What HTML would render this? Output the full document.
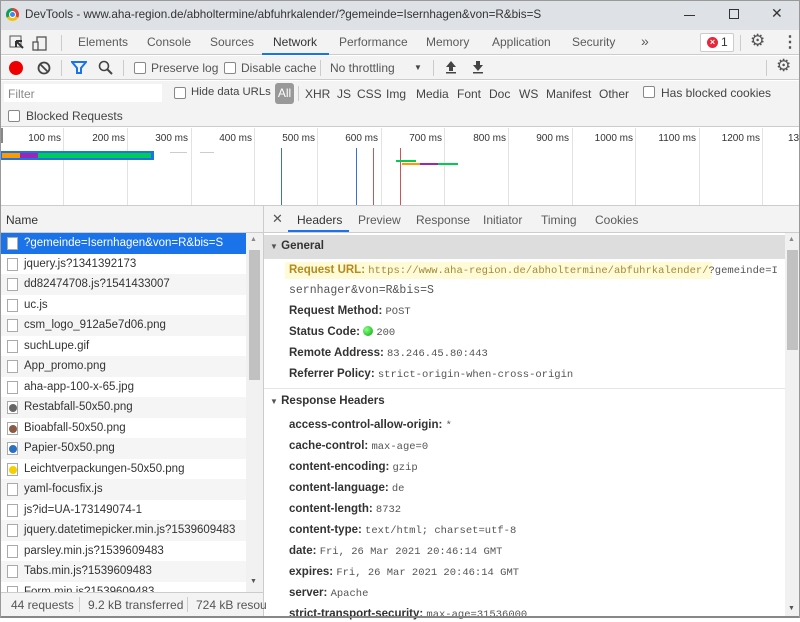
<!DOCTYPE html>
<html><head><meta charset="utf-8"><style>
*{margin:0;padding:0;box-sizing:border-box}
body{width:800px;height:618px;overflow:hidden;background:#fff;font-family:"Liberation Sans",sans-serif;font-size:12px;color:#333;position:relative}
.a{position:absolute;white-space:nowrap}
.mono{font-family:"Liberation Mono",monospace;font-size:10.5px;color:#555}
.cb{position:absolute;width:12px;height:12px;border:1px solid #888;border-radius:2px;background:#fff}
.tab{position:absolute;top:35px;color:#5a5a5a;font-size:12px}
.f{position:absolute;top:87px;color:#444;font-size:12px;white-space:nowrap}
.row{position:absolute;left:0;width:246px;height:20.5px;padding-left:24px;line-height:20px;font-size:11.5px;color:#333;white-space:nowrap;overflow:hidden}
.row i{position:absolute;left:7px;top:4px;width:11px;height:13px;border:1px solid #aaa;background:#fff}
.hl{position:absolute;left:289px;font-size:11.5px;line-height:14px;white-space:nowrap}
.tl{position:absolute;top:133px;font-size:10px;color:#333;text-align:right;width:60px}
.g{position:absolute;top:128px;width:1px;height:78px;background:#e2e2e2}
</style></head><body>
<div class="a" style="left:0;top:0;width:800px;height:30px;background:#dee1e6"></div>
<div class="a" style="left:6px;top:8px;width:13px;height:13px;border-radius:50%;background:conic-gradient(#db4437 0 120deg,#f4c20d 120deg 240deg,#0f9d58 240deg 360deg)"></div>
<div class="a" style="left:9px;top:11px;width:7px;height:7px;border-radius:50%;background:#4285f4;border:1px solid #fff"></div>
<div class="a" style="left:25px;top:8px;font-size:11.7px;color:#333">DevTools - www.aha-region.de/abholtermine/abfuhrkalender/?gemeinde=Isernhagen&amp;von=R&amp;bis=S</div>
<div class="a" style="left:684px;top:15px;width:11px;height:1px;background:#333"></div>
<div class="a" style="left:729px;top:9px;width:10px;height:10px;border:1px solid #333"></div>
<div class="a" style="left:771px;top:5px;font-size:14px;color:#333">✕</div>
<div class="a" style="left:0;top:30px;width:800px;height:25px;background:#f3f3f3;border-bottom:1px solid #ccc"></div>
<svg class="a" style="left:9px;top:34px" width="44" height="18"><rect x="1" y="2" width="11" height="11" fill="none" stroke="#555"/><path d="M7 7 L14 14 M7 7 L7 13 M7 7 L13 7" stroke="#333" stroke-width="2" fill="none"/><rect x="28" y="3" width="9" height="13" fill="none" stroke="#555" stroke-width="1.3"/><rect x="24" y="8" width="5" height="8" fill="#f3f3f3" stroke="#555" stroke-width="1.3"/></svg>
<div class="a" style="left:61px;top:35px;width:1px;height:16px;background:#ccc"></div>
<div class="tab" style="left:78px">Elements</div>
<div class="tab" style="left:147px">Console</div>
<div class="tab" style="left:210px">Sources</div>
<div class="tab" style="left:273px;color:#333">Network</div>
<div class="a" style="left:262px;top:53px;width:67px;height:2px;background:#1a73e8"></div>
<div class="tab" style="left:339px">Performance</div>
<div class="tab" style="left:426px">Memory</div>
<div class="tab" style="left:492px">Application</div>
<div class="tab" style="left:572px">Security</div>
<div class="tab" style="left:641px;font-size:14px;top:33px">»</div>
<div class="a" style="left:700px;top:33px;width:34px;height:19px;border:1px solid #ccc;border-radius:2px;background:#fff"></div>
<div class="a" style="left:707px;top:37px;width:11px;height:11px;border-radius:50%;background:#e8273b;color:#fff;font-size:9px;text-align:center;line-height:11px;font-weight:bold">×</div>
<div class="a" style="left:721px;top:35px;font-size:12px">1</div>
<div class="a" style="left:740px;top:35px;width:1px;height:16px;background:#ccc"></div>
<div class="a" style="left:750px;top:31px;font-size:17px;color:#555">⚙</div>
<div class="a" style="left:782px;top:32px;font-size:16px;color:#555;font-weight:bold">⋮</div>
<div class="a" style="left:0;top:56px;width:800px;height:24px;background:#f3f3f3;border-bottom:1px solid #ccc"></div>
<div class="a" style="left:9px;top:61px;width:14px;height:14px;border-radius:50%;background:#e00"></div>
<svg class="a" style="left:37px;top:61px" width="14" height="14"><circle cx="7" cy="7" r="5.5" fill="none" stroke="#444" stroke-width="1.8"/><path d="M3 3 L11 11" stroke="#444" stroke-width="1.8"/></svg>
<div class="a" style="left:61px;top:60px;width:1px;height:16px;background:#ccc"></div>
<svg class="a" style="left:71px;top:61px" width="16" height="14"><path d="M1 1 H15 L10 7 V12 H6 V7 Z" fill="none" stroke="#1a73e8" stroke-width="2"/></svg>
<svg class="a" style="left:98px;top:60px" width="16" height="16"><circle cx="6" cy="6" r="4.5" fill="none" stroke="#444" stroke-width="1.6"/><path d="M9.5 9.5 L14 14" stroke="#444" stroke-width="2"/></svg>
<div class="a" style="left:123px;top:60px;width:1px;height:16px;background:#ccc"></div>
<div class="cb" style="left:134px;top:62px"></div>
<div class="a" style="left:151px;top:61px;color:#555;font-size:12px">Preserve log</div>
<div class="cb" style="left:224px;top:62px"></div>
<div class="a" style="left:241px;top:61px;color:#555;font-size:12px">Disable cache</div>
<div class="a" style="left:320px;top:60px;width:1px;height:16px;background:#ccc"></div>
<div class="a" style="left:330px;top:61px;color:#555;font-size:12px">No throttling</div>
<div class="a" style="left:414px;top:63px;font-size:8px;color:#444">▼</div>
<div class="a" style="left:433px;top:60px;width:1px;height:16px;background:#ccc"></div>
<svg class="a" style="left:445px;top:60px" width="12" height="14"><path d="M6 1 L11 7 H8 V11 H4 V7 H1 Z" fill="#444"/><rect x="1" y="12" width="10" height="1.5" fill="#444"/></svg>
<svg class="a" style="left:472px;top:60px" width="12" height="14"><path d="M6 11 L11 5 H8 V1 H4 V5 H1 Z" fill="#444"/><rect x="1" y="12" width="10" height="1.5" fill="#444"/></svg>
<div class="a" style="left:766px;top:60px;width:1px;height:16px;background:#ccc"></div>
<div class="a" style="left:776px;top:56px;font-size:17px;color:#555">⚙</div>
<div class="a" style="left:0;top:81px;width:800px;height:46px;background:#f3f3f3;border-bottom:1px solid #ccc"></div>
<div class="a" style="left:4px;top:84px;width:158px;height:18px;background:#fff"></div>
<div class="a" style="left:8px;top:87px;color:#888;font-size:12px">Filter</div>
<div class="cb" style="left:174px;top:87px"></div>
<div class="f" style="left:191px;top:86px;font-size:11.3px">Hide data URLs</div>
<div class="a" style="left:275px;top:83px;width:19px;height:21px;background:#999;border-radius:3px;color:#fff;text-align:center;line-height:21px;font-size:12px">All</div>
<div class="a" style="left:298px;top:86px;width:1px;height:15px;background:#ccc"></div>
<div class="f" style="left:305px">XHR</div>
<div class="f" style="left:337px">JS</div>
<div class="f" style="left:357px">CSS</div>
<div class="f" style="left:386px">Img</div>
<div class="f" style="left:416px">Media</div>
<div class="f" style="left:457px">Font</div>
<div class="f" style="left:489px">Doc</div>
<div class="f" style="left:519px">WS</div>
<div class="f" style="left:546px">Manifest</div>
<div class="f" style="left:599px">Other</div>
<div class="cb" style="left:643px;top:86px"></div>
<div class="f" style="left:661px;top:86px">Has blocked cookies</div>
<div class="cb" style="left:8px;top:110px"></div>
<div class="a" style="left:26px;top:109px;color:#444;font-size:12px">Blocked Requests</div>
<div class="a" style="left:0;top:128px;width:3px;height:15px;background:#888"></div>
<div class="g" style="left:63px"></div><div class="g" style="left:127px"></div><div class="g" style="left:191px"></div><div class="g" style="left:254px"></div><div class="g" style="left:317px"></div><div class="g" style="left:381px"></div><div class="g" style="left:444px"></div><div class="g" style="left:508px"></div><div class="g" style="left:572px"></div><div class="g" style="left:635px"></div><div class="g" style="left:699px"></div><div class="g" style="left:762px"></div>
<div class="tl" style="left:1px">100 ms</div><div class="tl" style="left:65px">200 ms</div><div class="tl" style="left:128px">300 ms</div><div class="tl" style="left:192px">400 ms</div><div class="tl" style="left:255px">500 ms</div><div class="tl" style="left:318px">600 ms</div><div class="tl" style="left:382px">700 ms</div><div class="tl" style="left:446px">800 ms</div><div class="tl" style="left:509px">900 ms</div><div class="tl" style="left:573px">1000 ms</div><div class="tl" style="left:636px">1100 ms</div><div class="tl" style="left:700px">1200 ms</div><div class="a" style="left:788px;top:133px;font-size:10px">13</div>
<div class="a" style="left:1px;top:151px;width:153px;height:9px;background:#1a73e8"></div>
<div class="a" style="left:2px;top:153px;width:18px;height:5px;background:#f90"></div>
<div class="a" style="left:20px;top:153px;width:18px;height:5px;background:#9c27b0"></div>
<div class="a" style="left:38px;top:153px;width:113px;height:5px;background:#0c5"></div>
<div class="a" style="left:170px;top:152px;width:17px;height:1px;background:#ccc"></div>
<div class="a" style="left:200px;top:152px;width:14px;height:1px;background:#ccc"></div>
<div class="a" style="left:281px;top:148px;width:1px;height:58px;background:#3b6fd6"></div>
<div class="a" style="left:356px;top:148px;width:1px;height:58px;background:#3b6fd6"></div>
<div class="a" style="left:373px;top:148px;width:1px;height:58px;background:#c55"></div>
<div class="a" style="left:400px;top:148px;width:1px;height:58px;background:#c55"></div>
<div class="a" style="left:396px;top:160px;width:20px;height:2px;background:#0c5"></div>
<div class="a" style="left:402px;top:163px;width:18px;height:2px;background:#f90"></div>
<div class="a" style="left:420px;top:163px;width:18px;height:2px;background:#9c27b0"></div>
<div class="a" style="left:438px;top:163px;width:20px;height:2px;background:#0c5"></div>
<div class="a" style="left:0;top:205px;width:800px;height:1px;background:#ccc"></div>
<div class="a" style="left:0;top:206px;width:263px;height:27px;background:#f3f3f3;border-bottom:1px solid #ccc"></div>
<div class="a" style="left:6px;top:213px;font-size:12px">Name</div>
<div class="a" style="left:263px;top:206px;width:1px;height:412px;background:#ccc"></div>
<div class="row" style="top:233px;background:#1a73e8;color:#fff"><i></i>?gemeinde=Isernhagen&amp;von=R&amp;bis=S</div>
<div class="row" style="top:253.5px"><i></i>jquery.js?1341392173</div>
<div class="row" style="top:274px;background:#f5f5f5"><i></i>dd82474708.js?1541433007</div>
<div class="row" style="top:294.5px"><i></i>uc.js</div>
<div class="row" style="top:315px;background:#f5f5f5"><i></i>csm_logo_912a5e7d06.png</div>
<div class="row" style="top:335.5px"><i></i>suchLupe.gif</div>
<div class="row" style="top:356px;background:#f5f5f5"><i></i>App_promo.png</div>
<div class="row" style="top:376.5px"><i></i>aha-app-100-x-65.jpg</div>
<div class="row" style="top:397px;background:#f5f5f5"><i></i><b style="position:absolute;left:9px;top:7px;width:8px;height:8px;border-radius:50%;background:#666"></b>Restabfall-50x50.png</div>
<div class="row" style="top:417.5px"><i></i><b style="position:absolute;left:9px;top:7px;width:8px;height:8px;border-radius:50%;background:#8a5a44"></b>Bioabfall-50x50.png</div>
<div class="row" style="top:438px;background:#f5f5f5"><i></i><b style="position:absolute;left:9px;top:7px;width:8px;height:8px;border-radius:50%;background:#2a6fc4"></b>Papier-50x50.png</div>
<div class="row" style="top:458.5px"><i></i><b style="position:absolute;left:9px;top:7px;width:8px;height:8px;border-radius:50%;background:#f5d000"></b>Leichtverpackungen-50x50.png</div>
<div class="row" style="top:479px;background:#f5f5f5"><i></i>yaml-focusfix.js</div>
<div class="row" style="top:499.5px"><i></i>js?id=UA-173149074-1</div>
<div class="row" style="top:520px;background:#f5f5f5"><i></i>jquery.datetimepicker.min.js?1539609483</div>
<div class="row" style="top:540.5px"><i></i>parsley.min.js?1539609483</div>
<div class="row" style="top:561px;background:#f5f5f5"><i></i>Tabs.min.js?1539609483</div>
<div class="row" style="top:581.5px;height:11px"><i></i>Form.min.js?1539609483</div>
<div class="a" style="left:246px;top:233px;width:17px;height:359px;background:#f1f1f1"></div>
<div class="a" style="left:249px;top:250px;width:11px;height:130px;background:#c1c1c1"></div>
<div class="a" style="left:250px;top:236px;font-size:7px;color:#888">▲</div>
<div class="a" style="left:250px;top:578px;font-size:7px;color:#555">▼</div>
<div class="a" style="left:0;top:592px;width:263px;height:26px;background:#f3f3f3;border-top:1px solid #ccc"></div>
<div class="a" style="left:11px;top:598px;color:#555;font-size:12px">44 requests</div>
<div class="a" style="left:79px;top:597px;width:1px;height:15px;background:#ccc"></div>
<div class="a" style="left:88px;top:598px;color:#555;font-size:12px">9.2 kB transferred</div>
<div class="a" style="left:187px;top:597px;width:1px;height:15px;background:#ccc"></div>
<div class="a" style="left:196px;top:598px;color:#555;font-size:12px">724 kB resou</div>
<div class="a" style="left:264px;top:206px;width:536px;height:27px;background:#f3f3f3;border-bottom:1px solid #ccc"></div>
<div class="a" style="left:272px;top:211px;font-size:13px;color:#555">✕</div>
<div class="a" style="left:297px;top:213px;font-size:12px;color:#333">Headers</div>
<div class="a" style="left:288px;top:230px;width:61px;height:2px;background:#1a73e8"></div>
<div class="a" style="left:358px;top:213px;font-size:12px;color:#5a5a5a">Preview</div>
<div class="a" style="left:416px;top:213px;font-size:12px;color:#5a5a5a">Response</div>
<div class="a" style="left:483px;top:213px;font-size:12px;color:#5a5a5a">Initiator</div>
<div class="a" style="left:541px;top:213px;font-size:12px;color:#5a5a5a">Timing</div>
<div class="a" style="left:595px;top:213px;font-size:12px;color:#5a5a5a">Cookies</div>
<div class="a" style="left:264px;top:235px;width:521px;height:24px;background:#ddd"></div>
<div class="a" style="left:270px;top:240px;font-size:11.5px"><span style="font-size:8px;color:#555">▼</span> <b>General</b></div>
<div class="a" style="left:285px;top:262px;width:427px;height:17px;background:#fffbd6"></div>
<div class="hl" style="top:263px"><b style="color:#b58a1f">Request URL:</b> <span class="mono" style="color:#a58a3a">https://www.aha-region.de/abholtermine/abfuhrkalender/</span><span class="mono">?gemeinde=I</span></div>
<div class="hl mono" style="top:284px">sernhager&amp;von=R&amp;bis=S</div>
<div class="hl" style="top:304px"><b>Request Method:</b> <span class="mono">POST</span></div>
<div class="hl" style="top:325px"><b>Status Code:</b> <span style="display:inline-block;width:10px;height:10px;border-radius:50%;background:radial-gradient(circle at 35% 35%,#8f8,#0a0);vertical-align:-1px"></span> <span class="mono">200</span></div>
<div class="hl" style="top:346px"><b>Remote Address:</b> <span class="mono">83.246.45.80:443</span></div>
<div class="hl" style="top:367px"><b>Referrer Policy:</b> <span class="mono">strict-origin-when-cross-origin</span></div>
<div class="a" style="left:264px;top:388px;width:521px;height:1px;background:#e5e5e5"></div>
<div class="a" style="left:270px;top:395px;font-size:11.5px"><span style="font-size:8px;color:#555">▼</span> <b>Response Headers</b></div>
<div class="hl" style="top:418px"><b>access-control-allow-origin:</b> <span class="mono">*</span></div>
<div class="hl" style="top:439px"><b>cache-control:</b> <span class="mono">max-age=0</span></div>
<div class="hl" style="top:460px"><b>content-encoding:</b> <span class="mono">gzip</span></div>
<div class="hl" style="top:481px"><b>content-language:</b> <span class="mono">de</span></div>
<div class="hl" style="top:502px"><b>content-length:</b> <span class="mono">8732</span></div>
<div class="hl" style="top:523px"><b>content-type:</b> <span class="mono">text/html; charset=utf-8</span></div>
<div class="hl" style="top:544px"><b>date:</b> <span class="mono">Fri, 26 Mar 2021 20:46:14 GMT</span></div>
<div class="hl" style="top:565px"><b>expires:</b> <span class="mono">Fri, 26 Mar 2021 20:46:14 GMT</span></div>
<div class="hl" style="top:586px"><b>server:</b> <span class="mono">Apache</span></div>
<div class="hl" style="top:607px"><b>strict-transport-security:</b> <span class="mono">max-age=31536000</span></div>
<div class="a" style="left:785px;top:233px;width:15px;height:385px;background:#f1f1f1"></div>
<div class="a" style="left:787px;top:250px;width:11px;height:100px;background:#c1c1c1"></div>
<div class="a" style="left:788px;top:236px;font-size:7px;color:#888">▲</div>
<div class="a" style="left:788px;top:605px;font-size:7px;color:#555">▼</div>
<div class="a" style="left:0;top:616px;width:800px;height:2px;background:#888"></div>
<div class="a" style="left:0;top:0;width:800px;height:618px;border:1px solid #999;border-bottom:none"></div>
</body></html>
